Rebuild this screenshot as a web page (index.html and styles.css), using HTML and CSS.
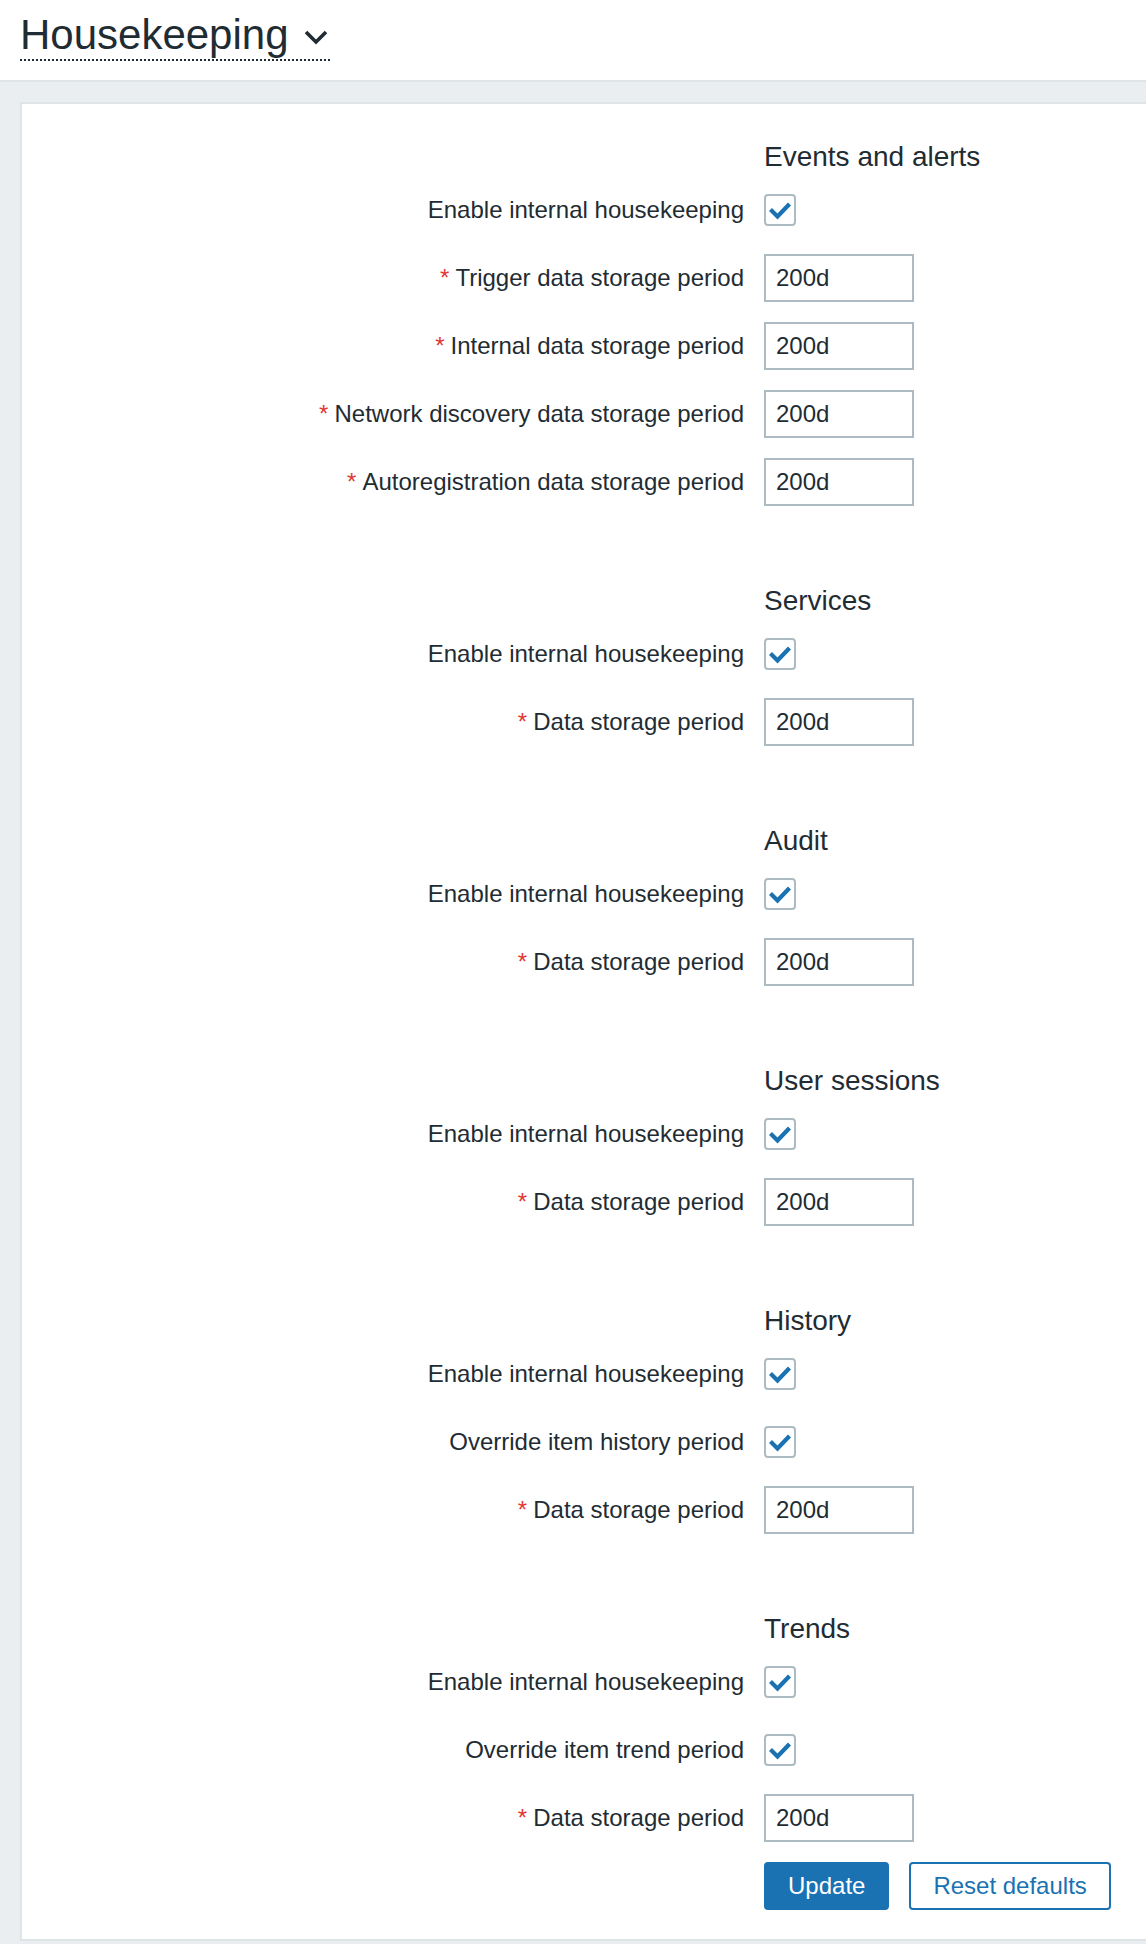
FILE: index.html
```html
<!DOCTYPE html>
<html lang="en">
<head>
<meta charset="utf-8">
<title>Housekeeping</title>
<link rel="stylesheet" href="styles.css">
</head>
<body>
<header class="page-header">
  <h1 class="page-title">Housekeeping<svg class="chevron" viewBox="0 0 24 16" width="24" height="16" aria-hidden="true"><polyline points="2,3 12,13 22,3" fill="none" stroke="#1f2c33" stroke-width="3.6" stroke-linejoin="miter"/></svg></h1>
</header>
<main class="panel">
  <form class="form">
    <section class="group">
      <div class="group-title">Events and alerts</div>
      <div class="row"><label class="label">Enable internal housekeeping</label><span class="checkbox"><svg viewBox="0 0 28 28" width="28" height="28"><polyline points="4.5,13.5 11.5,20.5 23.5,8" fill="none" stroke="#1a72b3" stroke-width="4.2"/></svg></span></div>
      <div class="row"><label class="label req">Trigger data storage period</label><input class="field" type="text" value="200d"></div>
      <div class="row"><label class="label req">Internal data storage period</label><input class="field" type="text" value="200d"></div>
      <div class="row"><label class="label req">Network discovery data storage period</label><input class="field" type="text" value="200d"></div>
      <div class="row"><label class="label req">Autoregistration data storage period</label><input class="field" type="text" value="200d"></div>
    </section>
    <section class="group">
      <div class="group-title">Services</div>
      <div class="row"><label class="label">Enable internal housekeeping</label><span class="checkbox"><svg viewBox="0 0 28 28" width="28" height="28"><polyline points="4.5,13.5 11.5,20.5 23.5,8" fill="none" stroke="#1a72b3" stroke-width="4.2"/></svg></span></div>
      <div class="row"><label class="label req">Data storage period</label><input class="field" type="text" value="200d"></div>
    </section>
    <section class="group">
      <div class="group-title">Audit</div>
      <div class="row"><label class="label">Enable internal housekeeping</label><span class="checkbox"><svg viewBox="0 0 28 28" width="28" height="28"><polyline points="4.5,13.5 11.5,20.5 23.5,8" fill="none" stroke="#1a72b3" stroke-width="4.2"/></svg></span></div>
      <div class="row"><label class="label req">Data storage period</label><input class="field" type="text" value="200d"></div>
    </section>
    <section class="group">
      <div class="group-title">User sessions</div>
      <div class="row"><label class="label">Enable internal housekeeping</label><span class="checkbox"><svg viewBox="0 0 28 28" width="28" height="28"><polyline points="4.5,13.5 11.5,20.5 23.5,8" fill="none" stroke="#1a72b3" stroke-width="4.2"/></svg></span></div>
      <div class="row"><label class="label req">Data storage period</label><input class="field" type="text" value="200d"></div>
    </section>
    <section class="group">
      <div class="group-title">History</div>
      <div class="row"><label class="label">Enable internal housekeeping</label><span class="checkbox"><svg viewBox="0 0 28 28" width="28" height="28"><polyline points="4.5,13.5 11.5,20.5 23.5,8" fill="none" stroke="#1a72b3" stroke-width="4.2"/></svg></span></div>
      <div class="row"><label class="label">Override item history period</label><span class="checkbox"><svg viewBox="0 0 28 28" width="28" height="28"><polyline points="4.5,13.5 11.5,20.5 23.5,8" fill="none" stroke="#1a72b3" stroke-width="4.2"/></svg></span></div>
      <div class="row"><label class="label req">Data storage period</label><input class="field" type="text" value="200d"></div>
    </section>
    <section class="group">
      <div class="group-title">Trends</div>
      <div class="row"><label class="label">Enable internal housekeeping</label><span class="checkbox"><svg viewBox="0 0 28 28" width="28" height="28"><polyline points="4.5,13.5 11.5,20.5 23.5,8" fill="none" stroke="#1a72b3" stroke-width="4.2"/></svg></span></div>
      <div class="row"><label class="label">Override item trend period</label><span class="checkbox"><svg viewBox="0 0 28 28" width="28" height="28"><polyline points="4.5,13.5 11.5,20.5 23.5,8" fill="none" stroke="#1a72b3" stroke-width="4.2"/></svg></span></div>
      <div class="row"><label class="label req">Data storage period</label><input class="field" type="text" value="200d"></div>
    </section>
    <div class="row buttons">
      <span class="label"></span>
      <button type="button" class="btn btn-primary">Update</button>
      <button type="button" class="btn btn-alt">Reset defaults</button>
    </div>
  </form>
</main>
</body>
</html>
```
FILE: styles.css
```css
html, body {
  margin: 0;
  padding: 0;
}
body {
  background: #ebeef0;
  font-family: "Liberation Sans", Arial, sans-serif;
  color: #1f2c33;
  width: 1146px;
  height: 1944px;
  overflow: hidden;
}
.page-header {
  background: #ffffff;
  border-bottom: 2px solid #dfe4e7;
  padding: 11px 20px 0;
  box-sizing: border-box;
  height: 82px;
}
.page-title {
  margin: 0;
  display: inline-flex;
  align-items: center;
  font-size: 42px;
  font-weight: normal;
  line-height: 48px;
  height: 48px;
  border-bottom: 2px dotted #1f2c33;
  color: #1f2c33;
}
.chevron {
  margin-left: 15px;
  margin-right: 2px;
  margin-top: 4px;
}
.panel {
  display: block;
  margin: 20px 0 0 20px;
  background: #ffffff;
  border: 2px solid #dfe4e7;
  border-right: none;
  padding: 36px 0 29px;
}
.form {
  display: flex;
  flex-direction: column;
  gap: 78px;
}
.group {
  display: flex;
  flex-direction: column;
  gap: 20px;
}
.group-title {
  margin-left: 742px;
  font-size: 28px;
  line-height: 34px;
  height: 34px;
  margin-bottom: -8px;
}
.row {
  display: flex;
  align-items: center;
  height: 48px;
  gap: 20px;
}
.label {
  width: 722px;
  flex: none;
  text-align: right;
  font-size: 24px;
  line-height: 48px;
  white-space: nowrap;
}
.req::before {
  content: "*";
  color: #e33734;
  margin-right: 6px;
}
.checkbox {
  width: 32px;
  height: 32px;
  box-sizing: border-box;
  border: 2px solid #acbbc2;
  border-radius: 4px;
  background: #ffffff;
  display: flex;
  align-items: center;
  justify-content: center;
}
.checkbox svg {
  display: block;
}
.field {
  width: 150px;
  height: 48px;
  box-sizing: border-box;
  border: 2px solid #acbbc2;
  border-radius: 0;
  padding: 0 10px;
  margin: 0;
  font-family: "Liberation Sans", Arial, sans-serif;
  font-size: 24px;
  color: #1f2c33;
  background: #ffffff;
  outline: none;
}
.buttons {
  margin-top: -58px;
}
.btn {
  height: 48px;
  box-sizing: border-box;
  border: 2px solid #1a72b3;
  border-radius: 4px;
  padding: 0 22px;
  margin: 0;
  font-family: "Liberation Sans", Arial, sans-serif;
  font-size: 24px;
  line-height: 44px;
  cursor: pointer;
}
.btn-primary {
  background: #1a72b3;
  color: #ffffff;
}
.btn-alt {
  background: #ffffff;
  color: #1a72b3;
}
```
